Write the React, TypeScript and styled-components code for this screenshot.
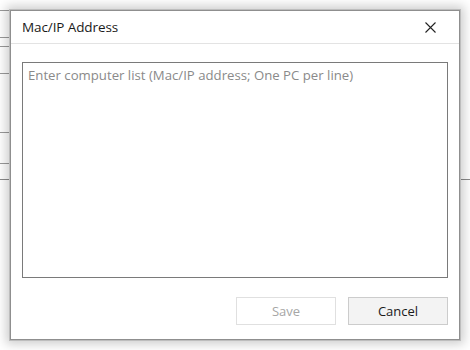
import React from "react";
import styled, { createGlobalStyle } from "styled-components";

const Global = createGlobalStyle`
  html, body { margin: 0; padding: 0; background: #ffffff; }
  body { font-family: "Open Sans", "Noto Sans", sans-serif; }
  * { box-sizing: border-box; }
`;

const Page = styled.div`
  position: relative;
  width: 470px;
  height: 350px;
  overflow: hidden;
  background: #ffffff;
`;

const Backdrop = styled.div`
  display: flex;
  flex-direction: column;
`;

const BackRow = styled.div<{ $h: number; $full?: boolean }>`
  height: ${(p) => p.$h}px;
  width: ${(p) => (p.$full ? "100%" : "220px")};
  border-bottom: 1px solid ${(p) => (p.$full ? "#8a8a8a" : "#9a9a9a")};
`;

const Dialog = styled.div`
  position: absolute;
  left: 10px;
  top: 10px;
  width: 450px;
  height: 330px;
  background: #ffffff;
  border: 1px solid #8f8f8f;
  box-shadow: 0 0 0 1px #bdbdbd, 0 0 10px 4px rgba(0, 0, 0, 0.2);
  display: flex;
  flex-direction: column;
`;

const Header = styled.div`
  height: 33px;
  flex: none;
  display: flex;
  align-items: center;
  justify-content: space-between;
  padding: 0 22px 0 11px;
  border-bottom: 1px solid #e3e3e3;
`;

const Title = styled.div`
  font-size: 13.5px;
  color: #1a1a1a;
  letter-spacing: -0.1px;
`;

const CloseButton = styled.button`
  border: none;
  background: transparent;
  padding: 0;
  width: 14px;
  height: 14px;
  display: flex;
  align-items: center;
  justify-content: center;
`;

const Body = styled.div`
  flex: 1;
  display: flex;
  flex-direction: column;
  padding: 18px 11px 16px 11px;
  gap: 19px;
`;

const ListInput = styled.textarea`
  height: 216px;
  width: 100%;
  flex: none;
  resize: none;
  border: 1px solid #7a7a7a;
  border-radius: 0;
  outline: none;
  padding: 3px 5px;
  font-family: "Open Sans", "Noto Sans", sans-serif;
  font-size: 13.2px;
  color: #222;
  &::placeholder {
    color: #8a8a8a;
  }
`;

const Footer = styled.div`
  display: flex;
  justify-content: flex-end;
  gap: 12px;
`;

const Button = styled.button<{ $disabled?: boolean }>`
  width: 100px;
  height: 28px;
  border: 1px solid ${(p) => (p.$disabled ? "#e0e0e0" : "#cccccc")};
  background: ${(p) => (p.$disabled ? "#ffffff" : "#f3f3f3")};
  color: ${(p) => (p.$disabled ? "#a6a6a6" : "#1a1a1a")};
  font-family: "Open Sans", "Noto Sans", sans-serif;
  font-size: 13px;
  padding: 0;
`;

export default function App() {
  return (
    <>
      <Global />
      <Page>
        <Backdrop>
          <BackRow $h={11} />
          <BackRow $h={27} />
          <BackRow $h={9} />
          <BackRow $h={27} />
          <BackRow $h={59} />
          <BackRow $h={31} />
          <BackRow $h={16} $full />
        </Backdrop>
        <Dialog>
          <Header>
            <Title>Mac/IP Address</Title>
            <CloseButton aria-label="Close">
              <svg width="11" height="11" viewBox="0 0 11 11">
                <path d="M0.5 0.5 L10.5 10.5 M10.5 0.5 L0.5 10.5" stroke="#222" strokeWidth="1.1" fill="none" />
              </svg>
            </CloseButton>
          </Header>
          <Body>
            <ListInput placeholder="Enter computer list (Mac/IP address; One PC per line)" />
            <Footer>
              <Button $disabled disabled>Save</Button>
              <Button>Cancel</Button>
            </Footer>
          </Body>
        </Dialog>
      </Page>
    </>
  );
}
